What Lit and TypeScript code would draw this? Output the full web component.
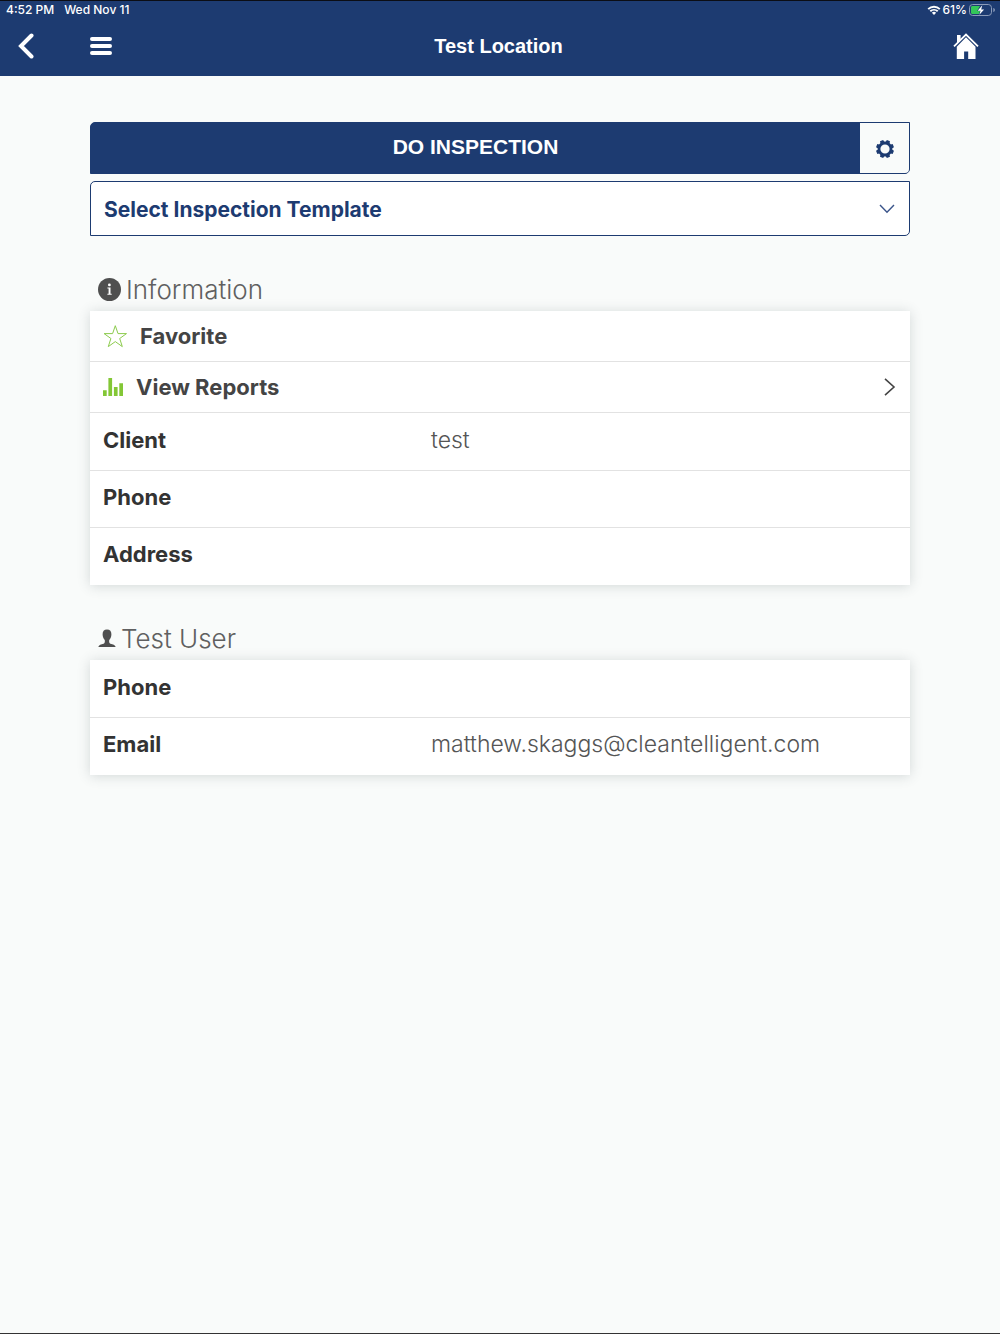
import { LitElement, html, css, svg, nothing } from "lit";
import { customElement, property } from "lit/decorators.js";

const icons = {
  wifi: html`<svg width="14" height="10" viewBox="0 0 14 10" aria-hidden="true">
    <path d="M1.2 4.1a8.4 8.4 0 0 1 11.6 0M3.3 6.3a5.4 5.4 0 0 1 7.4 0" fill="none" stroke="#fff" stroke-width="1.9"/>
    <path d="M7 10 4.9 7.8a3 3 0 0 1 4.2 0z" fill="#fff"/>
  </svg>`,
  battery: html`<svg width="27" height="12" viewBox="0 0 27 12" aria-hidden="true">
    <rect x=".5" y=".5" width="22" height="11" rx="3.2" fill="none" stroke="#8b9bb9"/>
    <path d="M24.3 4v4c1-.3 1.6-1.1 1.6-2s-.6-1.7-1.6-2z" fill="#8b9bb9"/>
    <path d="M3.5 2H11L8 7h3l-1 3H3.5C2.6 10 2 9.4 2 8.5v-5C2 2.6 2.6 2 3.5 2z" fill="#34c759"/>
    <path d="M13.3 1.3 8.6 6.7h2.9l-1.1 4L15.1 5.4h-2.9z" fill="#fff"/>
  </svg>`,
  back: html`<svg width="16" height="26" viewBox="0 0 16 26" aria-hidden="true">
    <path d="M13.5 2.5 3 13l10.5 10.5" fill="none" stroke="#fff" stroke-width="4" stroke-linecap="round" stroke-linejoin="miter"/>
  </svg>`,
  menu: html`<svg width="22" height="20" viewBox="0 0 22 20" aria-hidden="true">
    <path d="M2 3h18M2 10h18M2 17h18" stroke="#fff" stroke-width="4" stroke-linecap="round"/>
  </svg>`,
  home: html`<svg width="26" height="26" viewBox="0 0 26 26" aria-hidden="true">
    <path d="M4 2h3.6v5L4 10.5z" fill="#fff"/>
    <path d="M1 13.3 13 1.6l12 11.7" fill="none" stroke="#fff" stroke-width="1.8"/>
    <path d="M13 4.3 22.5 13.7V26h-7.3v-7.6h-4.1V26H3.8V13.7z" fill="#fff"/>
  </svg>`,
  gear: html`<svg width="18" height="18" viewBox="0 0 18 18" aria-hidden="true">
    <circle cx="9" cy="9" r="6" fill="none" stroke="#1d3b71" stroke-width="2.8"/>
    ${[22.5, 67.5, 112.5, 157.5, 202.5, 247.5, 292.5, 337.5].map(
      (a) => svg`<path d="M7.3 0h3.4l.5 3H6.8z" fill="#1d3b71" transform="rotate(${a} 9 9)"/>`
    )}
  </svg>`,
  chevronDown: html`<svg width="16" height="10" viewBox="0 0 16 10" aria-hidden="true">
    <path d="m1 1 7 7.3L15 1" fill="none" stroke="#3a548a" stroke-width="1.4"/>
  </svg>`,
  chevronRight: html`<svg width="12" height="18" viewBox="0 0 12 18" aria-hidden="true">
    <path d="m1 .8 9 8.2-9 8.2" fill="none" stroke="#444" stroke-width="1.6"/>
  </svg>`,
  info: html`<svg width="23" height="23" viewBox="0 0 23 23" aria-hidden="true">
    <circle cx="11.5" cy="11.5" r="11.5" fill="#4f4f4f"/>
    <circle cx="11.4" cy="6.9" r="1.4" fill="#fff"/>
    <path d="M9.4 9.5h3.1v6.3h1.2v.9H9.4v-.9h1.2v-5.4H9.4z" fill="#fff"/>
  </svg>`,
  user: html`<svg width="18" height="19" viewBox="0 0 18 19" aria-hidden="true">
    <path d="M9 .4c3 0 4.6 1.9 4.4 5-.1 2.300-1 4.300-2.200 5.600-.2 2.200.1 3.300 1.200 3.800 2.600.7 4.700 1 5.300 3.300H.3c.6-2.300 2.700-2.600 5.300-3.300 1.100-.5 1.400-1.600 1.200-3.800-1.200-1.300-2.100-3.300-2.200-5.600C4.400 2.300 6 .4 9 .4z" fill="#4f4f4f"/>
  </svg>`,
  star: html`<svg width="24" height="24" viewBox="0 0 24 24" aria-hidden="true">
    <path d="m12.300 1.700 2.700 7.900h8.500l-6.800 4.900 2.600 8.100-7-5-7 5 2.600-8.100-6.800-4.900h8.500z" fill="none" stroke="#8ccb4d" stroke-width="1"/>
  </svg>`,
  chart: html`<svg width="20" height="18" viewBox="0 0 20 18" aria-hidden="true">
    <path d="M0 12.3h3.7V18H0zM5.400 0h3.700v18H5.400zM10.900 9h3.700v9h-3.700zM16.300 5.300H20V18h-3.700z" fill="#83c736"/>
  </svg>`,
};

interface Field {
  label: string;
  value?: string;
}

@customElement("status-bar")
class StatusBar extends LitElement {
  static styles = css`
    :host {
      display: flex;
      justify-content: space-between;
      align-items: center;
      height: 18px;
      padding: 0 4px 0 6px;
      font: 500 12px/18px Inter, "Liberation Sans", sans-serif;
      color: #fff;
    }
    svg {
      display: block;
      flex: none;
    }
    .group {
      display: flex;
      align-items: center;
    }
    .clock {
      gap: 10px;
    }
    .power {
      gap: 2px;
    }
  `;

  render() {
    return html`
      <div class="group clock"><span>4:52 PM</span><span>Wed Nov 11</span></div>
      <div class="group power">${icons.wifi}<span>61%</span>${icons.battery}</div>
    `;
  }
}

@customElement("detail-list")
class DetailList extends LitElement {
  @property({ attribute: false }) fields: Field[] = [];

  static styles = css`
    :host {
      display: block;
    }
    .list {
      margin: 0;
      padding-bottom: 1px;
    }
    .row {
      display: grid;
      grid-template-columns: 40% 60%;
      align-items: center;
      box-sizing: border-box;
      min-height: 57px;
      padding-bottom: 4px;
    }
    .row + .row {
      border-top: 1px solid #e2e2e2;
    }
    .label,
    .value {
      margin: 0;
      padding-left: 13px;
      line-height: 28px;
    }
    .label {
      font-size: 22px;
      font-weight: 700;
      color: #333;
    }
    .value {
      font-size: 23px;
      font-weight: 300;
      color: #555;
      overflow-wrap: anywhere;
    }
  `;

  render() {
    return html`<dl class="list">
      ${this.fields.map(
        (f) => html`<div class="row">
          <dt class="label">${f.label}</dt>
          <dd class="value">${f.value ?? nothing}</dd>
        </div>`
      )}
    </dl>`;
  }
}

@customElement("app-root")
class AppRoot extends LitElement {
  static styles = css`
    :host {
      display: flex;
      flex-direction: column;
      box-sizing: border-box;
      min-height: 100vh;
      border-top: 1px solid #0b0d14;
      border-bottom: 1px solid #333;
      background: #f9fbfa;
      font-family: Inter, "Liberation Sans", sans-serif;
    }
    svg {
      display: block;
      flex: none;
    }
    button,
    select {
      margin: 0;
      padding: 0;
      border: 0;
      background: none;
      font: inherit;
      color: inherit;
      cursor: pointer;
    }
    a {
      color: inherit;
      text-decoration: none;
    }
    .header {
      background: #1d3b71;
      color: #fff;
    }
    .nav {
      display: grid;
      grid-template-columns: 1fr auto 1fr;
      align-items: center;
      box-sizing: border-box;
      height: 57px;
      padding: 0 21px 4px 18px;
    }
    .nav-left {
      display: flex;
      align-items: center;
      gap: 56px;
    }
    .nav-home {
      justify-self: end;
    }
    .title {
      margin: 0;
      font: 700 20px/24px "Liberation Sans", Arial, sans-serif;
    }
    .main {
      padding: 46px 9% 0;
    }
    .inspect {
      display: flex;
      height: 52px;
      box-sizing: border-box;
      border: 1px solid #1d3b71;
      border-radius: 5px 0 5px 0;
      background: #1d3b71;
      overflow: hidden;
    }
    .do {
      flex: 1;
      padding-bottom: 2px;
      color: #fff;
      font: 700 21px/24px "Liberation Sans", Arial, sans-serif;
    }
    .settings {
      display: grid;
      place-items: center;
      width: 49px;
      padding-top: 2px;
      background: #f9fbfa;
    }
    .picker {
      display: grid;
      grid-template-columns: 1fr auto;
      align-items: center;
      margin-top: 7px;
    }
    .select {
      grid-area: 1 / 1 / 2 / 3;
      appearance: none;
      width: 100%;
      height: 55px;
      padding: 2px 40px 0 13px;
      border: 1px solid #1d3b71;
      border-radius: 5px 0 5px 0;
      background: #fff;
      color: #1d3b71;
      font-size: 21px;
      font-weight: 700;
    }
    .arrow {
      grid-area: 1 / 2;
      padding-right: 15px;
      pointer-events: none;
    }
    .section-title {
      display: flex;
      align-items: center;
      gap: 5px;
      box-sizing: border-box;
      margin: 0;
      padding: 1px 8px 0;
      height: 44px;
      color: #606060;
      font-size: 26px;
      font-weight: 300;
      line-height: 32px;
    }
    .info,
    .contact {
      margin-top: 31px;
    }
    .card {
      background: #fff;
      box-shadow: 0 1px 12px rgba(60, 75, 80, 0.2);
    }
    .action {
      display: flex;
      align-items: center;
      gap: 13px;
      width: 100%;
      height: 51px;
      box-sizing: border-box;
      padding: 0 14px 0 13px;
      border-bottom: 1px solid #e2e2e2;
      color: #444;
      font-size: 22px;
      font-weight: 700;
      line-height: 28px;
    }
    .action-label {
      flex: 1;
      text-align: left;
    }
  `;

  render() {
    return html`
      <header class="header">
        <status-bar></status-bar>
        <nav class="nav">
          <div class="nav-left">
            <button aria-label="Back">${icons.back}</button>
            <button aria-label="Menu">${icons.menu}</button>
          </div>
          <h1 class="title">Test Location</h1>
          <a class="nav-home" href="#home" aria-label="Home">${icons.home}</a>
        </nav>
      </header>
      <main class="main">
        <div class="inspect">
          <button class="do">DO INSPECTION</button>
          <button class="settings" aria-label="Inspection settings">${icons.gear}</button>
        </div>
        <div class="picker">
          <select class="select" aria-label="Inspection template">
            <option>Select Inspection Template</option>
          </select>
          <span class="arrow">${icons.chevronDown}</span>
        </div>
        <section class="info">
          <h2 class="section-title">${icons.info}Information</h2>
          <div class="card">
            <button class="action">${icons.star}<span class="action-label">Favorite</span></button>
            <a class="action" href="#reports">
              ${icons.chart}<span class="action-label">View Reports</span>${icons.chevronRight}
            </a>
            <detail-list
              .fields=${[{ label: "Client", value: "test" }, { label: "Phone" }, { label: "Address" }]}
            ></detail-list>
          </div>
        </section>
        <section class="contact">
          <h2 class="section-title">${icons.user}Test User</h2>
          <div class="card">
            <detail-list
              .fields=${[{ label: "Phone" }, { label: "Email", value: "matthew.skaggs@cleantelligent.com" }]}
            ></detail-list>
          </div>
        </section>
      </main>
    `;
  }
}
